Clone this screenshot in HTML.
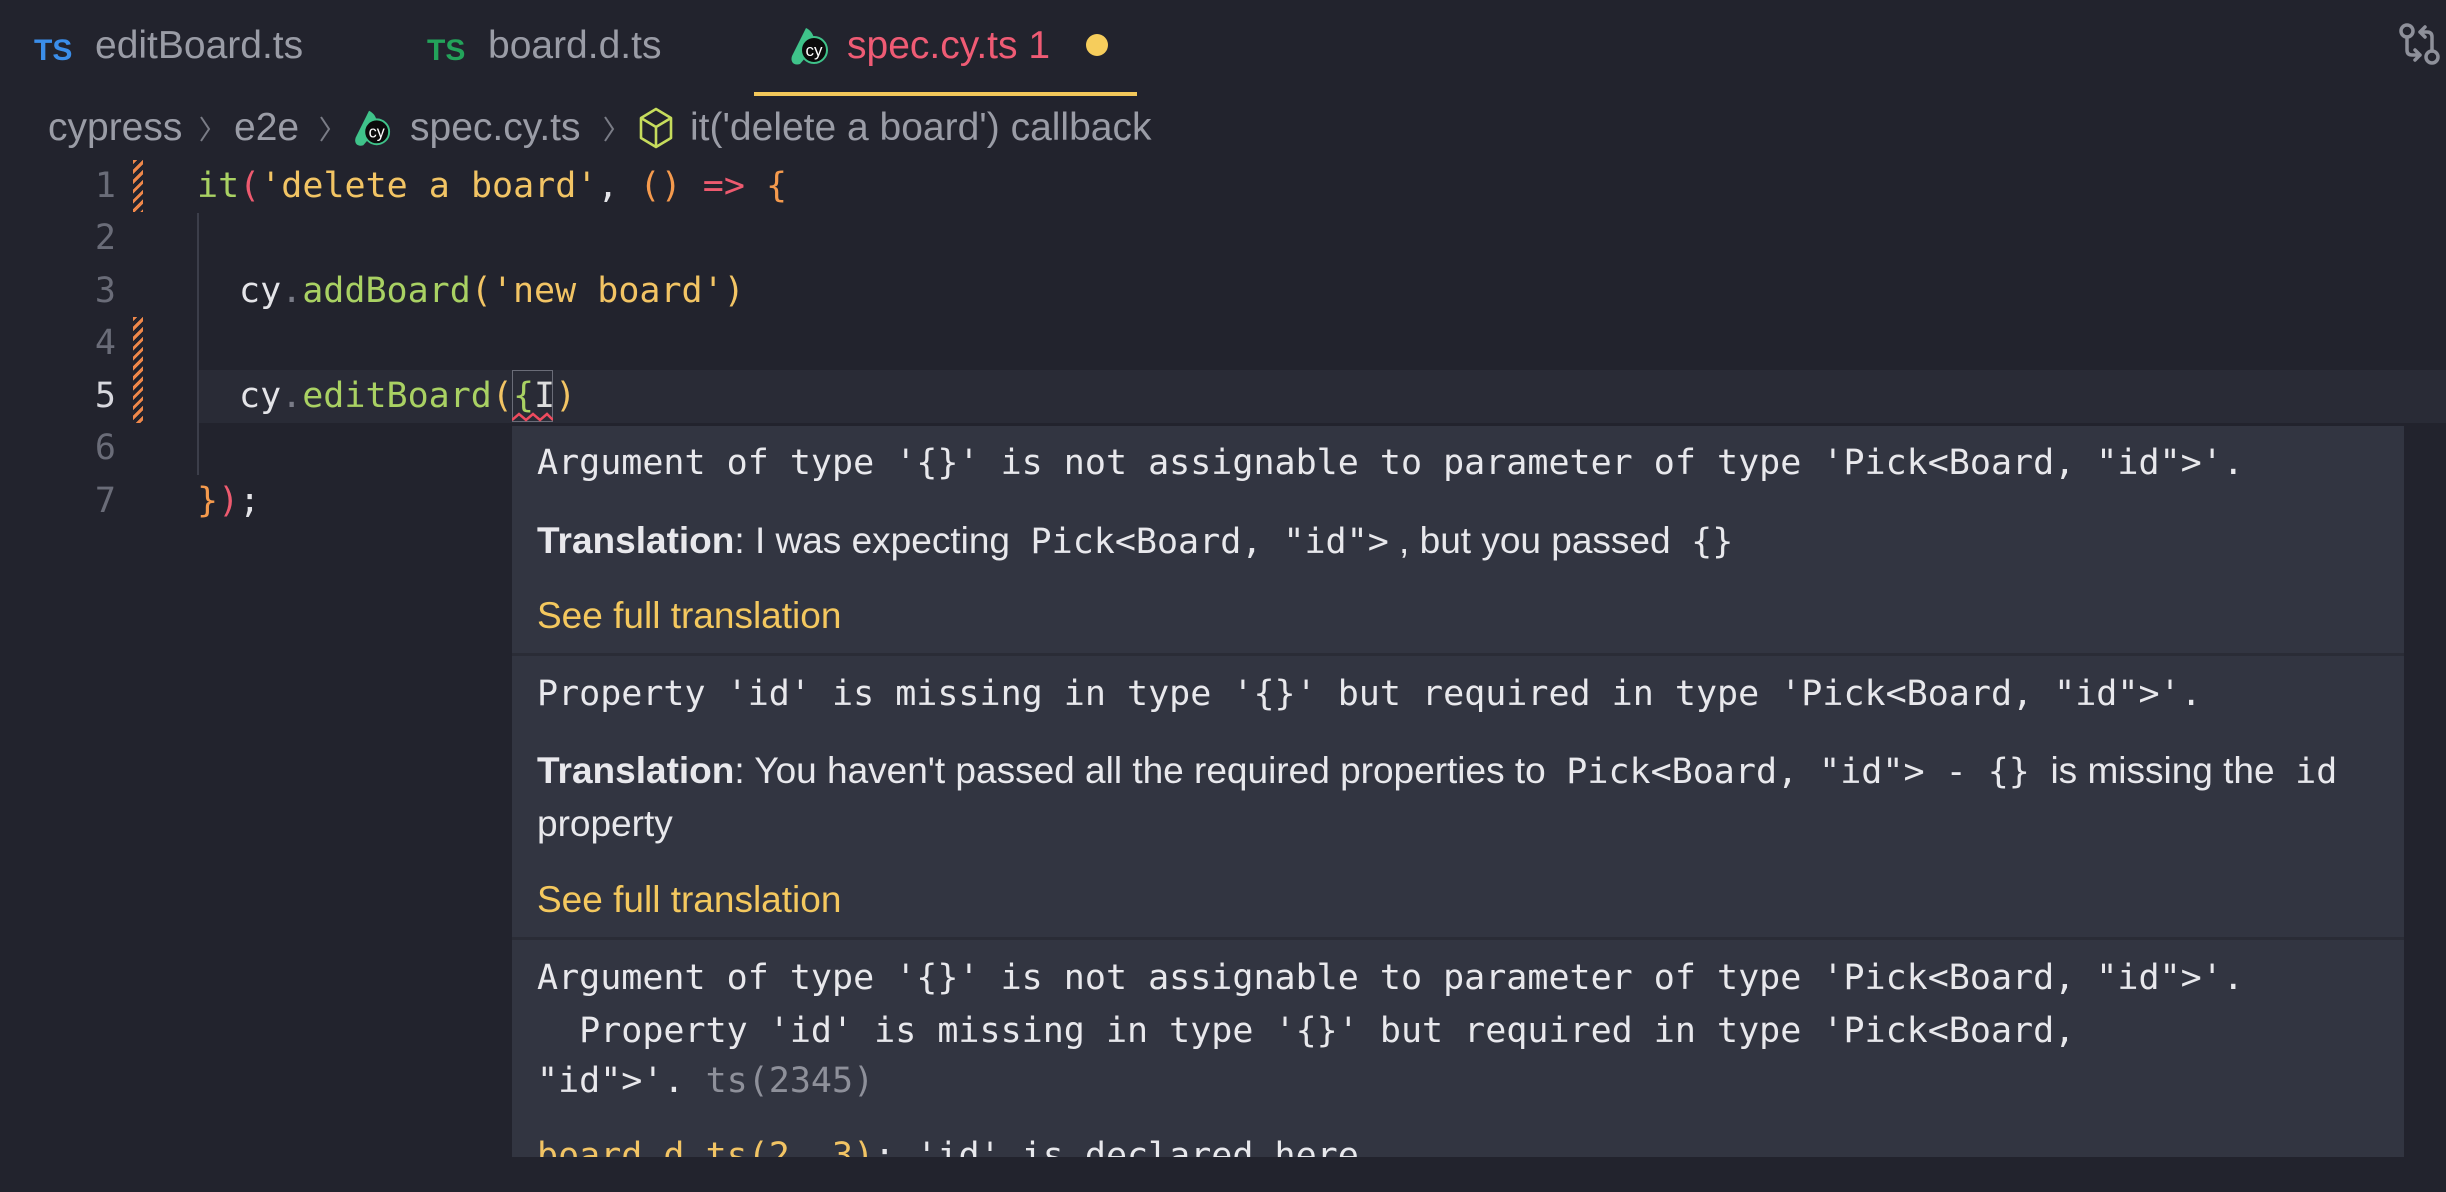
<!DOCTYPE html>
<html><head><meta charset="utf-8"><style>
*{margin:0;padding:0;box-sizing:border-box}
html,body{width:2446px;height:1192px;overflow:hidden;background:#22232d}
body{position:relative;font-family:"Liberation Sans",sans-serif;color:#dcdce2}
.a{position:absolute;white-space:pre}
.tab{font-size:39px;line-height:44px;top:24px}
.mono{font-family:"DejaVu Sans Mono","Liberation Mono",monospace;font-size:35px}
.ln{position:absolute;left:60px;width:56px;text-align:right;color:#6a6c78;font-family:"DejaVu Sans Mono",monospace;font-size:35px;line-height:52px}
.code{position:absolute;left:197px;line-height:52px;color:#e4e4e8}
.g{color:#a9d163}.y{color:#f2c464}.o{color:#f59a4d}.r{color:#ee5a6f}.d{color:#7a7c88}
.hv{position:absolute;left:537px;line-height:44px;color:#e8e8ec;white-space:pre}
.sans{font-family:"Liberation Sans",sans-serif;font-size:37px}
.see{color:#f4c85e}
.bc{position:absolute;top:106px;font-size:39px;line-height:44px;color:#9a9ca6;white-space:pre}
.mark{position:absolute;left:133px;width:10px;background:repeating-linear-gradient(135deg,#f0884a 0 3px,transparent 3px 7px)}
</style></head><body>
<!-- tabs -->
<div class="a tab" style="left:34px;color:#3b8eea;font-weight:bold;font-size:30px;top:29px">TS</div>
<div class="a tab" style="left:95px;color:#9a9ca6">editBoard.ts</div>
<div class="a tab" style="left:427px;color:#23a35a;font-weight:bold;font-size:30px;top:29px">TS</div>
<div class="a tab" style="left:488px;color:#9a9ca6">board.d.ts</div>
<svg class="a" style="left:784px;top:24px" width="46" height="44" viewBox="0 0 46 44"><path d="M22 4 C30 8 32 16 28 26 L16 40 C10 42 6 38 8 32 Z" fill="#3fc38a"/><circle cx="30" cy="26" r="13" fill="#0b0b0b" stroke="#3fc38a" stroke-width="2"/><text x="30" y="32" font-family="Liberation Sans" font-size="17" fill="#fff" text-anchor="middle">cy</text></svg>
<div class="a tab" style="left:847px;color:#ef5b74">spec.cy.ts 1</div>
<div class="a" style="left:1086px;top:34px;width:22px;height:22px;border-radius:50%;background:#f6cd5c"></div>
<div class="a" style="left:754px;top:92px;width:383px;height:4px;background:#f2c75a"></div>
<svg class="a" style="left:2398px;top:22px" width="46" height="46" viewBox="0 0 46 46" fill="none" stroke="#8e909a" stroke-width="3.5" stroke-linecap="round" stroke-linejoin="round"><circle cx="9" cy="9" r="6"/><path d="M9 15 V28 Q9 33 14 33 H22 M17 28 L22 33 L17 38"/><circle cx="34" cy="35" r="6"/><path d="M34 29 V15 Q34 10 29 10 H22 M27 5 L22 10 L27 15"/></svg>
<!-- breadcrumb -->
<div class="bc" style="left:48px">cypress</div>
<svg class="a" style="left:198px;top:114px" width="14" height="30" viewBox="0 0 14 30" fill="none" stroke="#7a7c86" stroke-width="2"><path d="M3 3 L11 15 L3 27"/></svg>
<div class="bc" style="left:234px">e2e</div>
<svg class="a" style="left:318px;top:114px" width="14" height="30" viewBox="0 0 14 30" fill="none" stroke="#7a7c86" stroke-width="2"><path d="M3 3 L11 15 L3 27"/></svg>
<svg class="a" style="left:348px;top:106px" width="44" height="44" viewBox="0 0 46 44"><path d="M22 4 C30 8 32 16 28 26 L16 40 C10 42 6 38 8 32 Z" fill="#3fc38a"/><circle cx="30" cy="26" r="13" fill="#0b0b0b" stroke="#3fc38a" stroke-width="2"/><text x="30" y="32" font-family="Liberation Sans" font-size="17" fill="#fff" text-anchor="middle">cy</text></svg>
<div class="bc" style="left:410px">spec.cy.ts</div>
<svg class="a" style="left:602px;top:114px" width="14" height="30" viewBox="0 0 14 30" fill="none" stroke="#7a7c86" stroke-width="2"><path d="M3 3 L11 15 L3 27"/></svg>
<svg class="a" style="left:638px;top:106px" width="36" height="44" viewBox="0 0 36 44" fill="none" stroke="#c6dc5c" stroke-width="2.6" stroke-linejoin="round"><path d="M18 3 L33 12 V32 L18 41 L3 32 V12 Z M3 12 L18 21 L33 12 M18 21 V41"/></svg>
<div class="bc" style="left:690px">it('delete a board') callback</div>
<!-- editor -->
<div class="a" style="left:197px;top:370px;width:2249px;height:53px;background:#292b36"></div>
<div class="a" style="left:197px;top:213px;width:2px;height:262px;background:#3c3e4a"></div>
<div class="mark" style="top:160px;height:52px"></div>
<div class="mark" style="top:317px;height:106px"></div>
<div class="ln" style="top:160px">1</div>
<div class="ln" style="top:212px">2</div>
<div class="ln" style="top:265px">3</div>
<div class="ln" style="top:317px">4</div>
<div class="ln" style="top:370px;color:#d8d8de">5</div>
<div class="ln" style="top:422px">6</div>
<div class="ln" style="top:475px">7</div>
<div class="code mono" style="top:160px"><span class="g">it</span><span class="r">(</span><span class="y">'delete a board'</span>, <span class="o">()</span> <span class="r">=&gt;</span> <span class="o">{</span></div>
<div class="code mono" style="top:265px;left:239px">cy<span class="d">.</span><span class="g">addBoard</span><span class="y">('new board')</span></div>
<div class="code mono" style="top:370px;left:239px">cy<span class="d">.</span><span class="g">editBoard</span><span class="y">(</span><span class="g">{</span><span style="color:#ddd">I</span><span class="y">)</span></div>
<div class="a" style="left:512px;top:370px;width:41px;height:52px;border:1px solid #6a6c78"></div>
<svg class="a" style="left:512px;top:412px" width="41" height="10" viewBox="0 0 41 10"><path d="M0 8 L7 2 L14 8 L21 2 L28 8 L35 2 L41 8" stroke="#ee4b5e" stroke-width="2.5" fill="none"/></svg>
<div class="code mono" style="top:475px"><span class="o">}</span><span class="r">)</span>;</div>
<!-- hover -->
<div class="a" style="left:512px;top:426px;width:1892px;height:731px;background:#323541;overflow:hidden">
<div class="a" style="left:0;top:227px;width:1892px;height:3px;background:#2a2c36"></div>
<div class="a" style="left:0;top:511px;width:1892px;height:3px;background:#2a2c36"></div>
</div>
<div class="hv mono" style="top:441px">Argument of type '{}' is not assignable to parameter of type 'Pick&lt;Board, "id"&gt;'.</div>
<div class="hv sans" style="top:519px"><b>Translation</b>: I was expecting  <span class="mono">Pick&lt;Board, "id"&gt;</span> , but you passed  <span class="mono">{}</span></div>
<div class="hv sans see" style="top:594px">See full translation</div>
<div class="hv mono" style="top:672px">Property 'id' is missing in type '{}' but required in type 'Pick&lt;Board, "id"&gt;'.</div>
<div class="hv sans" style="top:749px"><b>Translation</b>: You haven't passed all the required properties to  <span class="mono">Pick&lt;Board, "id"&gt; - {}</span>  is missing the  <span class="mono">id</span></div>
<div class="hv sans" style="top:802px">property</div>
<div class="hv sans see" style="top:878px">See full translation</div>
<div class="hv mono" style="top:956px">Argument of type '{}' is not assignable to parameter of type 'Pick&lt;Board, "id"&gt;'.</div>
<div class="hv mono" style="top:1009px">  Property 'id' is missing in type '{}' but required in type 'Pick&lt;Board,</div>
<div class="hv mono" style="top:1059px">"id"&gt;'. <span style="color:#8e909a">ts(2345)</span></div>
<div class="a" style="left:512px;top:1120px;width:1892px;height:37px;overflow:hidden"><div class="a mono" style="left:25px;top:14px;line-height:44px;color:#e8e8ec"><span class="y">board.d.ts(2, 3)</span>: 'id' is declared here.</div></div>
</body></html>
